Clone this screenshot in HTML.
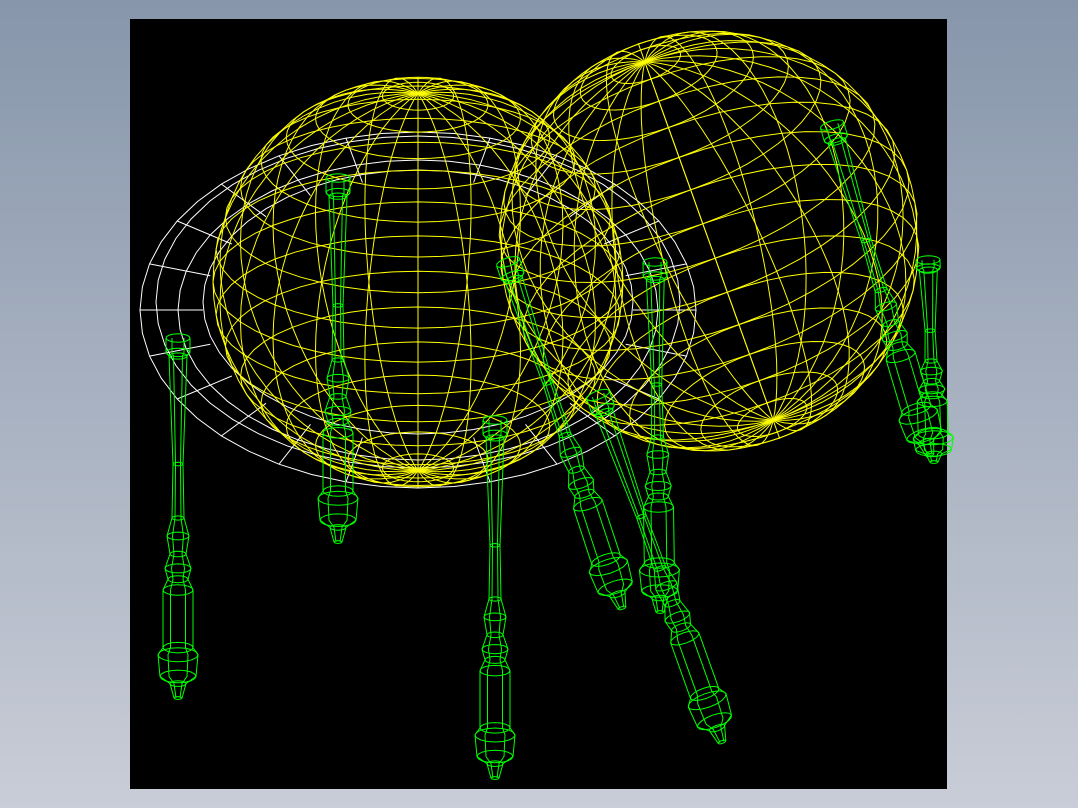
<!DOCTYPE html>
<html><head><meta charset="utf-8">
<style>
html,body{margin:0;padding:0;width:1078px;height:808px;overflow:hidden;
background:linear-gradient(#8796ab,#c9cdd7);}
svg{position:absolute;left:0;top:0}
</style></head>
<body>
<svg id="s" width="1078" height="808" xmlns="http://www.w3.org/2000/svg">
<rect x="130" y="19" width="817" height="770" fill="#000"/>
<g id="g" fill="none" stroke-width="1"></g>
</svg>
<script>
var g=document.getElementById('g'),out='';
function P(pts,c){var d='M'+pts.map(p=>p[0].toFixed(1)+','+p[1].toFixed(1)).join('L');out+='<path d="'+d+'" stroke="'+c+'"/>';}
function sphere(cx,cy,r,a,b,c){
 a=a*Math.PI/180;b=b*Math.PI/180;
 function pr(x,y,z){var y1=y*Math.cos(a)-z*Math.sin(a),z1=y*Math.sin(a)+z*Math.cos(a);
  var x2=x*Math.cos(b)-y1*Math.sin(b),y2=x*Math.sin(b)+y1*Math.cos(b);return [cx+r*x2,cy-r*y2];}
 for(var i=-8;i<=8;i++){var ph=i*Math.PI/18,pts=[];for(var k=0;k<=48;k++){var t=k*Math.PI*2/48;pts.push(pr(Math.cos(ph)*Math.cos(t),Math.sin(ph),Math.cos(ph)*Math.sin(t)));}P(pts,c);}
 for(var j=0;j<24;j++){var t=j*Math.PI/12,pts=[];for(var k=0;k<=36;k++){var ph=-Math.PI/2+k*Math.PI/36;pts.push(pr(Math.cos(ph)*Math.cos(t),Math.sin(ph),Math.cos(ph)*Math.sin(t)));}P(pts,c);}
}
// torus (white)
(function(){var cx=418,cy=310,c='#fff';var rs=[[278,178],[262,166],[240,150],[215,132]];
 rs.forEach(function(e,i){var pts=[];for(var k=0;k<=48;k++){var t=k*Math.PI*2/48;pts.push([cx+e[0]*Math.cos(t),cy+e[1]*Math.sin(t)-(i%2?8:0)]);}P(pts,c);});
 for(var k=0;k<24;k++){var t=k*Math.PI*2/24;P([[cx+278*Math.cos(t),cy+178*Math.sin(t)],[cx+215*Math.cos(t),cy+132*Math.sin(t)]],c);}
})();
sphere(418,282,205,23,0,'#ff0');
sphere(709,241,210,25,19.7,'#ff0');
// legs
var prof=[[0,12],[0.04,12],[0.05,9],[0.35,5],[0.5,6],[0.55,11],[0.6,8],[0.64,13],[0.67,10],[0.7,15],[0.86,15],[0.88,20],[0.94,18],[0.96,8],[1,4]];
function leg(x1,y1,x2,y2,s){var dx=x2-x1,dy=y2-y1,L=Math.hypot(dx,dy),ux=dx/L,uy=dy/L,nx=-uy,ny=ux;s=s||1;
 [-1,-0.5,0.5,1].forEach(function(f){P(prof.map(p=>[x1+ux*L*p[0]+nx*p[1]*s*f,y1+uy*L*p[0]+ny*p[1]*s*f]),'#0f0');});
 prof.forEach(function(p){var px=x1+ux*L*p[0],py=y1+uy*L*p[0],r=p[1]*s,pts=[];for(var k=0;k<=16;k++){var t=k*Math.PI*2/16;pts.push([px+nx*r*Math.cos(t)+ux*r*0.35*Math.sin(t),py+ny*r*Math.cos(t)+uy*r*0.35*Math.sin(t)]);}P(pts,'#0f0');});
}
leg(178,338,178,698);
leg(338,178,338,542);
leg(495,420,495,778);
leg(508,262,622,608);
leg(655,262,660,612);
leg(598,395,722,742);
leg(832,125,930,455);
leg(928,260,934,462);
g.innerHTML=out;
</script>
</body></html>
